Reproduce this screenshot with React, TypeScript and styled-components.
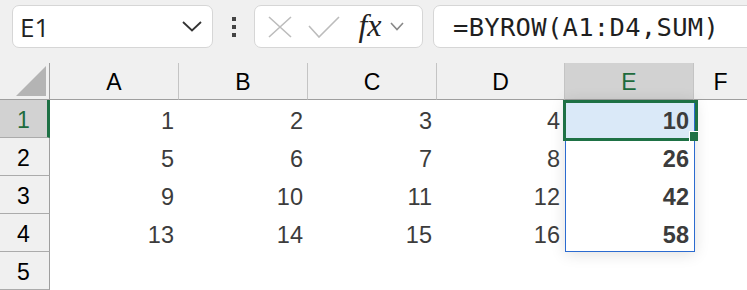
import React from 'react';
import styled, { createGlobalStyle } from 'styled-components';

const GlobalStyle = createGlobalStyle`
  html, body {
    margin: 0;
    padding: 0;
    background: #f0f0f0;
    overflow: hidden;
  }
  body {
    font-family: "Liberation Sans", Arial, sans-serif;
  }
`;

const Page = styled.div`
  width: 747px;
  height: 290px;
  display: flex;
  flex-direction: column;
  overflow: hidden;
`;

const Toolbar = styled.div`
  height: 63px;
  flex: none;
  display: flex;
  align-items: flex-start;
  padding: 5px 0 0 12px;
  box-sizing: border-box;
  background: #f0f0f0;
`;

const Field = styled.div<{ $width?: number; $grow?: boolean }>`
  height: 43px;
  box-sizing: border-box;
  background: #fff;
  border: 1px solid #d6d6d6;
  border-radius: 7px;
  display: flex;
  align-items: center;
  flex: ${(p) => (p.$grow ? '1 0 auto' : 'none')};
  width: ${(p) => (p.$width ? `${p.$width}px` : 'auto')};
  margin-right: ${(p) => (p.$grow ? '-12px' : '0')};
`;

const NameText = styled.span`
  font-family: "Open Sans", "Liberation Sans", sans-serif;
  font-size: 26px;
  color: #222;
  padding-left: 7px;
  flex: 1;
`;

const Chevron = styled.svg`
  margin-right: 10px;
`;

const Dots = styled.div`
  width: 41px;
  height: 43px;
  display: flex;
  flex-direction: column;
  align-items: center;
  justify-content: center;
  gap: 4px;
  span {
    width: 4px;
    height: 4px;
    background: #444;
  }
`;

const IconRow = styled.div`
  display: flex;
  align-items: center;
  padding-left: 12px;
`;

const IconSlot = styled.div<{ $w: number }>`
  width: ${(p) => p.$w}px;
  display: flex;
  align-items: center;
  justify-content: center;
`;

const Fx = styled.span`
  font-family: "Liberation Serif", "Times New Roman", serif;
  font-style: italic;
  font-size: 32px;
  color: #222;
  line-height: 1;
  margin-top: -4px;
`;

const Formula = styled.span`
  font-family: "DejaVu Sans Mono", "Liberation Mono", monospace;
  font-size: 25.5px;
  color: #1f1f1f;
  padding-left: 19px;
  letter-spacing: 0.3px;
`;

const Sheet = styled.div`
  flex: 1;
  display: grid;
  grid-template-columns: 50px 129px 129px 129px 128px 129px 1fr;
  grid-template-rows: 37px repeat(5, 38px);
  background: #fff;
`;

const Corner = styled.div`
  grid-column: 1;
  grid-row: 1;
  background: #f0f0f0;
  border-right: 1px solid #9e9e9e;
  border-bottom: 1px solid #9e9e9e;
  display: flex;
  align-items: flex-end;
  justify-content: flex-end;
  padding: 0 3px 3px 0;
  box-sizing: border-box;
  svg {
    display: block;
  }
`;

const ColHead = styled.div<{ $col: number; $active?: boolean; $last?: boolean }>`
  grid-column: ${(p) => p.$col};
  grid-row: 1;
  background: ${(p) => (p.$active ? '#d2d2d2' : '#f0f0f0')};
  color: ${(p) => (p.$active ? '#1e6b3d' : '#000')};
  border-right: ${(p) => (p.$last ? 'none' : '1px solid #c4c4c4')};
  border-bottom: 1px solid #9e9e9e;
  box-sizing: border-box;
  font-size: 23px;
  display: flex;
  align-items: center;
  justify-content: center;
  padding-top: 3px;
`;

const RowHead = styled.div<{ $row: number; $active?: boolean }>`
  grid-column: 1;
  grid-row: ${(p) => p.$row};
  background: ${(p) => (p.$active ? '#d2d2d2' : '#f0f0f0')};
  color: ${(p) => (p.$active ? '#1e6b3d' : '#000')};
  border-right: ${(p) => (p.$active ? '3px solid #1e7145' : '1px solid #9e9e9e')};
  border-bottom: 1px solid #ababab;
  box-sizing: border-box;
  font-size: 23px;
  display: flex;
  align-items: center;
  justify-content: center;
  padding: 3px ${(p) => (p.$active ? '0' : '2px')} 0 0;
`;

const Cell = styled.div<{ $row: number; $col: number; $bold?: boolean; $selected?: boolean }>`
  grid-column: ${(p) => p.$col};
  grid-row: ${(p) => p.$row};
  background: ${(p) => (p.$selected ? '#dae9f8' : 'transparent')};
  color: #3c3c3c;
  font-size: 23.5px;
  font-weight: ${(p) => (p.$bold ? 700 : 400)};
  display: flex;
  align-items: center;
  justify-content: flex-end;
  padding: 4px 5px 0 0;
  box-sizing: border-box;
  position: relative;
  z-index: 2;
`;

const Spill = styled.div`
  grid-column: 6;
  grid-row: 2 / 6;
  margin: 0 -1px 0 0;
  border: 1px solid #2b6bd0;
  background: #fff;
  box-shadow: 0 2px 14px rgba(0, 0, 0, 0.13);
  pointer-events: none;
  position: relative;
  z-index: 1;
`;

const Selection = styled.div`
  grid-column: 6;
  grid-row: 2;
  margin: 0 -4px -3px -2px;
  border: 3px solid #1e7145;
  box-sizing: border-box;
  pointer-events: none;
  position: relative;
  z-index: 3;
`;

const FillHandle = styled.span`
  position: absolute;
  right: -3px;
  bottom: -3px;
  width: 8px;
  height: 9px;
  background: #1e7145;
  border-left: 1px solid #fff;
  border-top: 1px solid #fff;
`;

const columns = ['A', 'B', 'C', 'D', 'E', 'F'];
const data = [
  [1, 2, 3, 4],
  [5, 6, 7, 8],
  [9, 10, 11, 12],
  [13, 14, 15, 16],
];

const App: React.FC = () => {
  return (
    <Page>
      <GlobalStyle />
      <Toolbar>
        <Field $width={201}>
          <NameText>E1</NameText>
          <Chevron width="20" height="11" viewBox="0 0 20 11">
            <path d="M1 1 L10 9.5 L19 1" fill="none" stroke="#333" strokeWidth="1.8" />
          </Chevron>
        </Field>
        <Dots>
          <span />
          <span />
          <span />
        </Dots>
        <Field $width={169}>
          <IconRow>
            <IconSlot $w={26}>
              <svg width="24" height="22" viewBox="0 0 24 22">
                <path d="M1 1 L23 21 M23 1 L1 21" stroke="#bcbcbc" strokeWidth="1.6" fill="none" />
              </svg>
            </IconSlot>
            <IconSlot $w={62}>
              <svg width="32" height="22" viewBox="0 0 32 22">
                <path d="M1 10 L11 21 L31 1" stroke="#bcbcbc" strokeWidth="1.6" fill="none" />
              </svg>
            </IconSlot>
            <IconSlot $w={30}>
              <Fx>fx</Fx>
            </IconSlot>
            <IconSlot $w={24}>
              <svg width="14" height="9" viewBox="0 0 14 9">
                <path d="M1 1 L7 7.5 L13 1" stroke="#888" strokeWidth="1.6" fill="none" />
              </svg>
            </IconSlot>
          </IconRow>
        </Field>
        <div style={{ width: 10, flex: 'none' }} />
        <Field $grow>
          <Formula>=BYROW(A1:D4,SUM)</Formula>
        </Field>
      </Toolbar>
      <Sheet>
        <Corner>
          <svg width="30" height="30" viewBox="0 0 30 30">
            <polygon points="30,0 30,30 0,30" fill="#b4b4b4" />
          </svg>
        </Corner>
        {columns.map((c, i) => (
          <ColHead key={c} $col={i + 2} $active={c === 'E'} $last={i === columns.length - 1}>
            {c}
          </ColHead>
        ))}
        {[1, 2, 3, 4, 5].map((r) => (
          <RowHead key={r} $row={r + 1} $active={r === 1}>
            {r}
          </RowHead>
        ))}
        {data.map((row, ri) => (
          <React.Fragment key={ri}>
            {row.map((v, ci) => (
              <Cell key={ci} $row={ri + 2} $col={ci + 2}>
                {v}
              </Cell>
            ))}
            <Cell $row={ri + 2} $col={6} $bold $selected={ri === 0}>
              {row.reduce((a, b) => a + b, 0)}
            </Cell>
          </React.Fragment>
        ))}
        <Spill />
        <Selection>
          <FillHandle />
        </Selection>
      </Sheet>
    </Page>
  );
};

export default App;
